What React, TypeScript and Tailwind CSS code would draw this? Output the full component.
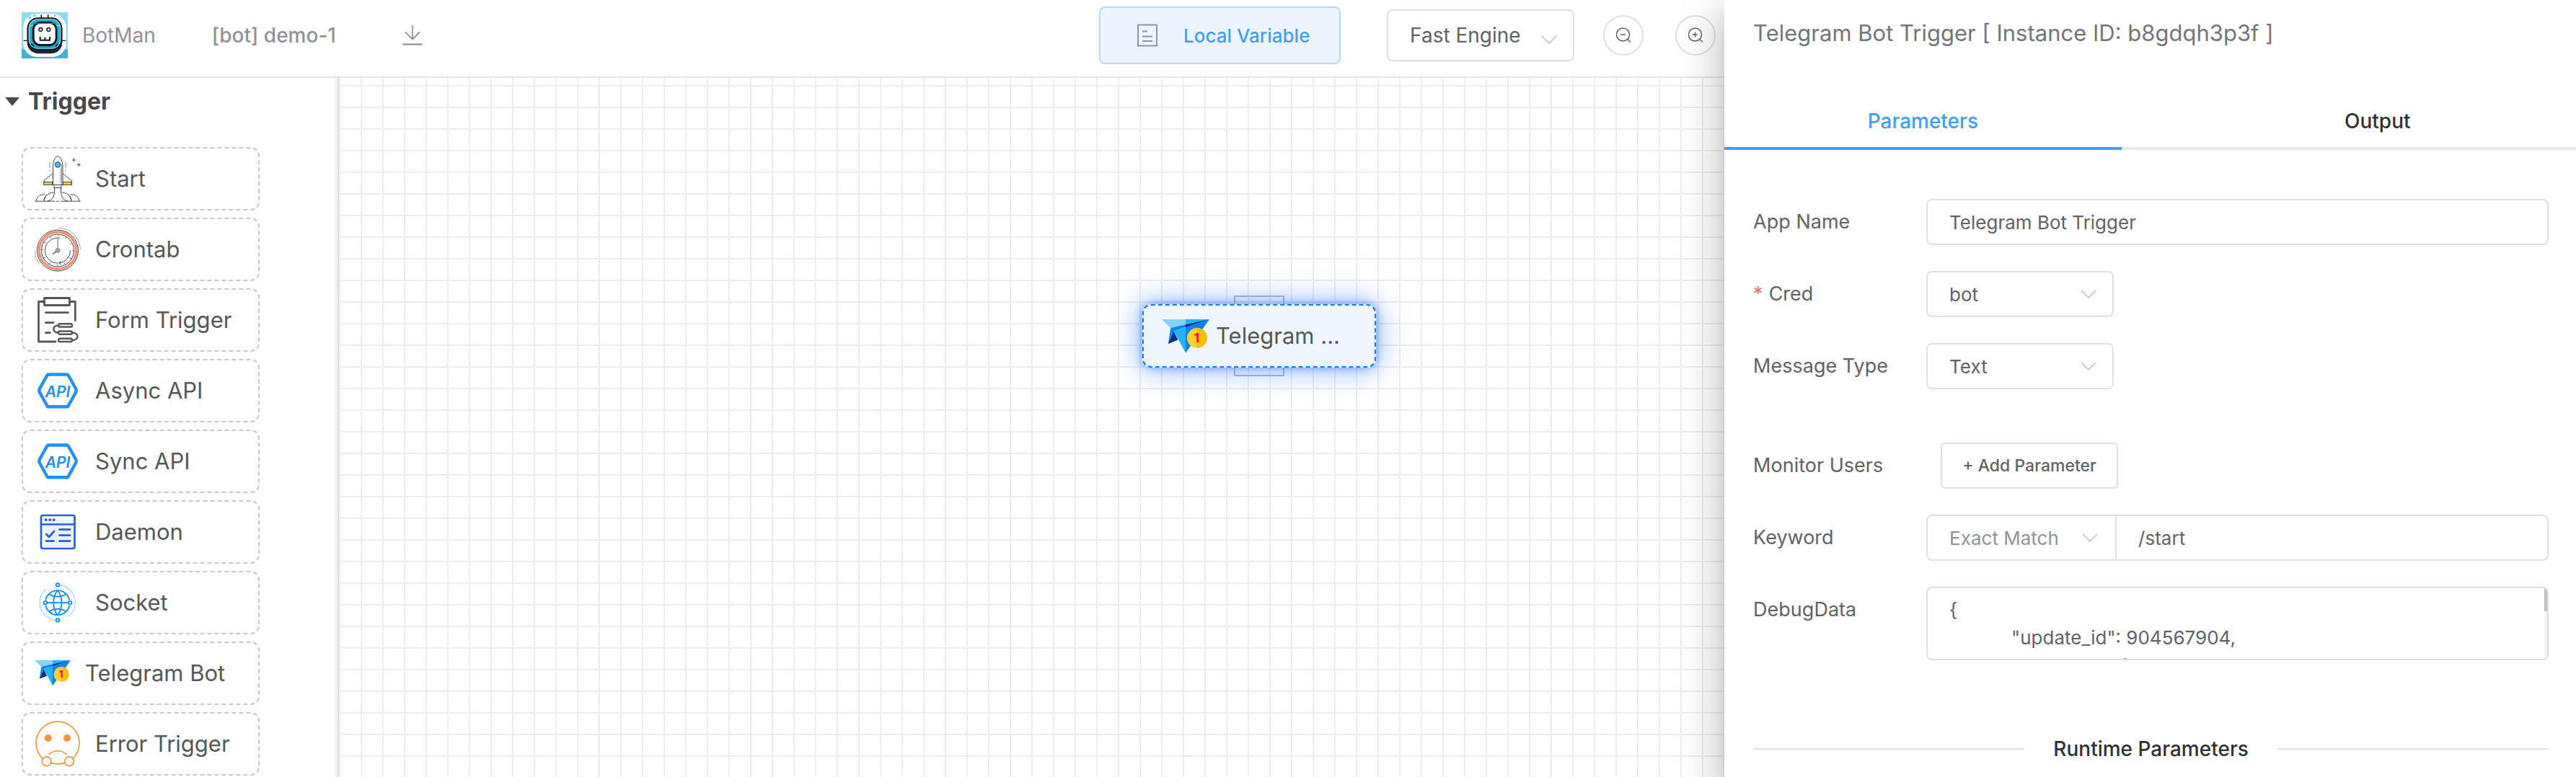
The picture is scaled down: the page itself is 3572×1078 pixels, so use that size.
import type { ReactNode } from "react";

const ink = "#3f4650";

function LogoIcon() {
  return (
    <svg viewBox="0 0 192 192" className="size-16" aria-hidden="true">
      <rect width="192" height="192" fill="#8fdcee" />
      <rect y="154" width="192" height="38" fill="#3fb3cf" />
      <rect x="7" y="6" width="178" height="180" rx="56" fill="#fbfcfd" />
      <path d="M82 10v14M110 10v14" stroke="#111827" strokeWidth="5" />
      <circle cx="34" cy="22" r="5" fill="#5cc7de" />
      <circle cx="54" cy="14" r="4" fill="#5cc7de" />
      <circle cx="138" cy="14" r="4" fill="#5cc7de" />
      <circle cx="158" cy="22" r="4" fill="#a8dfeb" />
      <path d="M8 118h20M164 118h20" stroke="#111827" strokeWidth="4" />
      <rect x="23" y="24" width="146" height="148" rx="46" fill="#1b2436" />
      <rect x="23" y="22" width="146" height="136" rx="44" fill="#0f1623" />
      <rect x="29" y="28" width="134" height="124" rx="38" fill="#dfe8ee" />
      <rect x="32" y="30" width="128" height="121" rx="36" fill="#18b4cc" />
      <path d="M33 56h20M139 56h20" stroke="#7fdcea" strokeWidth="4" />
      <path d="M40 132l12 10M152 132l-12 10" stroke="#0f1623" strokeWidth="5" />
      <rect x="44" y="38" width="104" height="104" rx="34" fill="#0f1623" />
      <rect x="48" y="44" width="96" height="4" rx="2" fill="#5b6b7d" />
      <rect x="53" y="48" width="87" height="84" rx="24" fill="#fff" />
      <circle cx="79" cy="72" r="7" fill="none" stroke="#1f2937" strokeWidth="5" />
      <circle cx="112" cy="72" r="7" fill="none" stroke="#1f2937" strokeWidth="5" />
      <path d="M55 93h83" stroke="#eef1f4" strokeWidth="3" />
      <path d="M77 102v14h40v-14M97 104v12" fill="none" stroke="#111827" strokeWidth="6" />
    </svg>
  );
}

function RocketIcon() {
  return (
    <svg viewBox="0 0 64 64" className="size-16" fill="none" stroke={ink} strokeWidth="1" aria-hidden="true">
      <path d="M25 25 13 34.500V40.500H25M39.300 25l12 9.500V40.500h-12" fill="#fff" />
      <rect x="13" y="36.500" width="11.500" height="4" fill="#ffcf33" />
      <rect x="39.500" y="36.500" width="11.500" height="4" fill="#ffcf33" />
      <path d="M25.500 40.500V15C25.500 7 29 .7 32 .7S39 7 39 15v25.500z" fill="#fff" />
      <path d="M36 17v21M37.500 12v28" stroke="#8b9097" />
      <circle cx="32" cy="12.500" r="3.800" fill="#3bbcf7" />
      <rect x="27" y="40.500" width="10" height="4" />
      <path d="M21 9v8M21 19.500v2M43 9v8M43 19.500v2" stroke="#8b9097" />
      <path d="M54.500 3.500v5M52 6h5M61.300 10.200v5M58.800 12.700h5" />
      <path d="M27.500 45v5c0 7-4 12.500-9.500 13M36.500 45v5c0 7 4 12.500 9.500 13" />
      <path d="M2.500 63c0-5 4-9 9-9h3M13.500 63c0-6 5-12 13-12M61.500 63c0-5-4-9-9-9h-3M50.500 63c0-6-5-12-13-12" />
      <path d="M17 54.500c-3 2-4 5-4 8M47 54.500c3 2 4 5 4 8" />
      <path d="M0 63.200h28M30 63.200h4M36 63.200h28" />
    </svg>
  );
}

function ClockIcon() {
  return (
    <svg viewBox="0 0 64 64" className="size-16" fill="none" stroke={ink} strokeWidth="1" aria-hidden="true">
      <circle cx="32" cy="33.500" r="28.500" />
      <circle cx="32" cy="33.500" r="25.700" stroke="#fa8f6f" strokeWidth="3.400" />
      <circle cx="32" cy="33.500" r="22.500" />
      <circle cx="32" cy="33.500" r="17.500" strokeDasharray="50 2 58" strokeDashoffset="25" />
      <circle cx="32" cy="33.500" r="20.800" strokeWidth="2.600" strokeDasharray=".8 10.090" />
      <path d="M32 17v13" stroke="#8b9097" strokeWidth="1.500" />
      <path d="M30 35l-5 3.500" strokeWidth="1.300" />
      <circle cx="32" cy="33.500" r="2.700" fill="#ffd9cc" />
      <circle cx="32" cy="33.500" r=".8" fill="#f2603c" stroke="#f2603c" />
      <path d="M37 49l-3.500 1.800 2.500 2.200" />
      <path d="M33.500 2A31.500 31.500 0 0 1 63.500 33" strokeDasharray="1.500 1" strokeWidth=".8" />
      <path d="M.5 34a31.500 31.500 0 0 0 6 18" strokeDasharray="1.500 1" strokeWidth=".8" />
    </svg>
  );
}

function FormIcon() {
  return (
    <svg viewBox="0 0 64 64" className="size-16" fill="none" stroke="#555657" strokeWidth="2.800" strokeLinecap="round" strokeLinejoin="round" aria-hidden="true">
      <rect x="13.500" y="1.500" width="35" height="10" />
      <path d="M13 6.500H5.500V62H29M49 6.500h7.300v26" />
      <path d="M15.500 21.700H46.500M15.500 35.700H26M15.500 49.700h6" />
      <rect x="33" y="37.300" width="19" height="4.200" rx="2.100" strokeWidth="2.500" />
      <rect x="33" y="47.500" width="19" height="4.200" rx="2.100" strokeWidth="2.500" />
      <rect x="33" y="57.800" width="19" height="4.200" rx="2.100" strokeWidth="2.500" />
      <path d="M33 39.400c-9 0-9 10.200 0 10.200M52 49.600c10 0 10 10.300 0 10.300" strokeWidth="2.500" />
    </svg>
  );
}

function ApiIcon() {
  return (
    <svg viewBox="0 0 64 64" className="size-16" aria-hidden="true">
      <path
        d="M20 9.500H44Q46 9.500 47.200 11.500L57.200 29.500Q58.200 31.700 57.200 34L46 54.300H18L6.800 34Q5.800 31.700 6.800 29.500L16.800 11.500Q18 9.500 20 9.500Z"
        fill="none"
        stroke="#228fff"
        strokeWidth="4.400"
        strokeLinejoin="round"
      />
      <text x="32" y="41" textAnchor="middle" fontFamily="Inter, sans-serif" fontSize="21" fontStyle="italic" fontWeight="600" fill="#228fff">
        API
      </text>
    </svg>
  );
}

function DaemonIcon() {
  return (
    <svg viewBox="0 0 64 64" className="size-16" fill="none" stroke="#2b5fd3" strokeWidth="2.700" strokeLinecap="round" strokeLinejoin="round" aria-hidden="true">
      <rect x="15.500" y="15" width="40" height="38" fill="#e8f1fd" stroke="none" />
      <rect x="9" y="9" width="46.500" height="46" rx="2.500" />
      <path d="M9 21.500h46.500" />
      <g fill="#2b5fd3" stroke="none">
        <circle cx="15.700" cy="15.200" r="1.900" />
        <circle cx="21.300" cy="15.200" r="1.900" />
        <circle cx="26.700" cy="15.200" r="1.900" />
      </g>
      <path d="M16 35l4 4 7-8M34.500 28.700h14.500M34.500 36.700h14.500M34.500 44.700h14.500M15.800 44.700H26.500" />
    </svg>
  );
}

function GlobeIcon() {
  return (
    <svg viewBox="0 0 64 64" className="size-16" fill="none" stroke="#1592ff" strokeWidth="1.900" aria-hidden="true">
      <path d="M34.500 7.500A24.600 24.600 0 0 1 47 51.200M15.500 13.500A24.600 24.600 0 0 0 29 56.500" stroke="#a9d4ff" strokeWidth="1.300" />
      <path d="M15.200 28.500a17 17 0 0 1 33.200 0M15.200 36a17 17 0 0 0 33.200 0" />
      <path d="M31.800 15c-7.500 9-7.500 25.500 0 34.500M31.800 15c7.500 9 7.500 25.500 0 34.500" />
      <path d="M20 20c7 5 17 5 23.500 0M20 44.500c7-5 17-5 23.500 0M17.500 32.200h29" />
      <g fill="#fff">
        <circle cx="15" cy="32.200" r="2.300" />
        <circle cx="49" cy="32.200" r="2.300" />
        <circle cx="32" cy="7.500" r="2.300" />
        <circle cx="32" cy="56.500" r="2.300" />
      </g>
    </svg>
  );
}

function TelegramIcon({ className }: { className: string }) {
  return (
    <svg viewBox="0 0 194 137" className={className} aria-hidden="true">
      <path d="M0 0H97V24L36 35Z" fill="#85d1ff" />
      <path d="M97 0H194L97 24Z" fill="#22b5fb" />
      <path d="M36 35L194 0L49 48L26 100Z" fill="#0a84ff" />
      <path d="M97 22L194 0L97 34Z" fill="#00307f" />
      <path d="M49 48L26 100L66 84Z" fill="#00307f" />
      <path d="M49 48L97 32V137Z" fill="#23b4f8" />
      <path d="M97 34L194 0L97 137Z" fill="#0682ff" />
      <circle cx="144" cy="76" r="41" fill="#ffd12e" />
      <path d="M144 35a41 41 0 0 1 0 82Z" fill="#ffbe00" />
      <text x="142" y="94" textAnchor="middle" fontFamily="Inter, sans-serif" fontSize="50" fontWeight="800" fill="#f0145a">
        1
      </text>
    </svg>
  );
}

function SadIcon() {
  return (
    <svg viewBox="0 0 64 64" className="size-16" fill="none" stroke="#ff943c" strokeWidth="1.700" strokeLinecap="round" aria-hidden="true">
      <path d="M11 52.500A30 30 0 1 1 53 52.500M23 58.600q9 2.600 18.500 0" />
      <circle cx="16.600" cy="56.300" r="6.400" />
      <circle cx="48" cy="56.300" r="6.400" />
      <path d="M20 46.500q12-9.500 24.300 0" />
      <g fill="#ff943c" stroke="none">
        <circle cx="18.800" cy="24" r="5" />
        <circle cx="45" cy="24" r="5" />
      </g>
    </svg>
  );
}

function Chevron({ className }: { className: string }) {
  return (
    <svg viewBox="0 0 22 12" className={className} fill="none" stroke="#bcc0c8" strokeWidth="1.600" aria-hidden="true">
      <path d="M1 1l10 10L21 1" />
    </svg>
  );
}

function MagnifierIcon({ plus = false }: { plus?: boolean }) {
  return (
    <svg viewBox="0 0 24 24" className="size-6" fill="none" stroke="#606266" strokeWidth="1.500" aria-hidden="true">
      <circle cx="11.500" cy="11" r="9" />
      <path d="M18 17.500l4 4M8 11h7" />
      {plus && <path d="M11.500 7.500v7" />}
    </svg>
  );
}

const triggers: { name: string; icon: ReactNode }[] = [
  { name: "Start", icon: <RocketIcon /> },
  { name: "Crontab", icon: <ClockIcon /> },
  { name: "Form Trigger", icon: <FormIcon /> },
  { name: "Async API", icon: <ApiIcon /> },
  { name: "Sync API", icon: <ApiIcon /> },
  { name: "Daemon", icon: <DaemonIcon /> },
  { name: "Socket", icon: <GlobeIcon /> },
  { name: "Telegram Bot", icon: <TelegramIcon className="w-[50px]" /> },
  { name: "Error Trigger", icon: <SadIcon /> },
];

function Header() {
  return (
    <header className="flex h-[108px] shrink-0 items-center border-b-2 border-[#e4e4e4] pr-3 pb-2 pl-[30px] text-[28px]">
      <LogoIcon />
      <h1 className="ml-5 text-[#909399]">BotMan</h1>
      <span className="ml-[78px] font-medium text-[#909399]">[bot] demo-1</span>
      <button type="button" aria-label="Download" className="ml-[92px]">
        <svg viewBox="0 0 28 28" className="size-7" fill="none" stroke="#909399" strokeWidth="1.800" aria-hidden="true">
          <path d="M14 0v20M4 9.500l10 10 10-10" />
          <path d="M.5 26.500h27" strokeWidth="2.200" />
        </svg>
      </button>
      <button
        type="button"
        className="ml-auto flex h-20 w-[335px] items-center gap-9 rounded-lg border-2 border-[#b3d8ff] bg-[#ecf5ff] pl-[51px] text-[26px] font-medium text-[#409eff]"
      >
        <svg viewBox="0 0 28 32" className="h-8 w-7" fill="none" stroke="#909399" strokeWidth="2" aria-hidden="true">
          <rect x="1" y="1.500" width="26" height="29" />
          <path d="M7 10.500h7M7 17.500h14M7 24h14" />
        </svg>
        Local Variable
      </button>
      <div className="relative ml-16 h-[72px] w-[260px]">
        <select
          aria-label="Engine"
          className="size-full appearance-none rounded-lg border-2 border-[#dcdfe6] bg-white pl-[30px] text-[#606266]"
        >
          <option>Fast Engine</option>
        </select>
        <Chevron className="pointer-events-none absolute top-9 right-6 w-[22px]" />
      </div>
      <button type="button" aria-label="Zoom out" className="ml-10 flex size-14 items-center justify-center rounded-full border-2 border-[#dcdfe6] bg-white">
        <MagnifierIcon />
      </button>
      <button type="button" aria-label="Zoom in" className="ml-11 flex size-14 items-center justify-center rounded-full border-2 border-[#dcdfe6] bg-white">
        <MagnifierIcon plus />
      </button>
    </header>
  );
}

function Sidebar() {
  return (
    <nav aria-label="Nodes" className="w-[472px] shrink-0 overflow-hidden border-r-2 border-[#efefef]">
      <div className="h-full border-r-2 border-[#dcdcdc]">
        <div className="h-full border-r-4 border-[#f2f2f2]">
          <button type="button" aria-expanded="true" className="flex h-[66px] items-center gap-3 pl-[7px] text-[32px] font-bold text-[#484848]">
            <svg viewBox="0 0 20 12" className="w-5" fill="#484848" aria-hidden="true">
              <path d="M0 0h20L10 12z" />
            </svg>
            Trigger
          </button>
          <ul className="mt-[30px] flex flex-col gap-[10px] pl-[30px]">
            {triggers.map((t) => (
              <li
                key={t.name}
                className="flex h-[88px] w-[330px] items-center gap-5 rounded-xl border-2 border-dashed border-[#c6c7cb] pl-4 text-[31px] text-[#565758]"
              >
                {t.icon}
                {t.name}
              </li>
            ))}
          </ul>
        </div>
      </div>
    </nav>
  );
}

function Canvas() {
  return (
    <main className="relative flex-1 overflow-hidden bg-[linear-gradient(to_right,#ededed_2px,transparent_2px),linear-gradient(to_bottom,#ededed_2px,transparent_2px)] bg-[length:30px_30px] bg-[position:28px_10px]">
      <div className="absolute top-[314px] left-[1112px] w-[324px]">
        <div className="absolute -top-3 left-[127px] h-28 w-[70px] border-2 border-[#b4bac8]" />
        <div className="relative flex h-[88px] items-center gap-[9px] rounded-xl border-2 border-dashed border-[#1879ff] bg-[#f0f6ff] pl-[25px] text-[31px] text-[#565758] shadow-[0_0_12px_0_rgba(24,108,255,0.5),0_0_40px_2px_rgba(24,108,255,0.5)]">
          <TelegramIcon className="w-[66px]" />
          Telegram ...
        </div>
      </div>
    </main>
  );
}

function Field({ label, htmlFor, required = false, children }: { label: string; htmlFor: string; required?: boolean; children: ReactNode }) {
  return (
    <div className="flex items-start">
      <label htmlFor={htmlFor} className="flex h-16 w-60 shrink-0 items-center gap-2 text-[27px]">
        {required && <span className="text-[#f56c6c]">*</span>}
        {label}
      </label>
      {children}
    </div>
  );
}

function SelectBox({ id, value }: { id: string; value: string }) {
  return (
    <div className="relative h-16 w-[260px]">
      <select id={id} className="size-full appearance-none rounded-lg border-2 border-[#dcdfe6] bg-white pl-[30px] text-[26px] text-[#606266]">
        <option>{value}</option>
      </select>
      <Chevron className="pointer-events-none absolute top-[26px] right-6 w-[22px]" />
    </div>
  );
}

const debugData = `{
\t"update_id": 904567904,
\t"message": {
\t\t"message_id": 12,
\t\t"text": "/start"
\t}
}`;

function Drawer() {
  return (
    <aside className="z-10 w-[33.06%] shrink-0 bg-white text-[#606266] shadow-[0_16px_20px_-10px_rgba(0,0,0,0.2),0_32px_48px_4px_rgba(0,0,0,0.14),0_12px_60px_10px_rgba(0,0,0,0.12)]">
      <h2 className="flex h-[92px] items-center pl-10 text-[31px] text-[#72767b]">Telegram Bot Trigger [ Instance ID: b8gdqh3p3f ]</h2>
      <div role="tablist" className="mt-9 flex h-20 text-[28px] font-medium">
        <button type="button" role="tab" aria-selected="true" className="flex-1 border-b-4 border-[#409eff] pt-1 text-[#409eff]">
          Parameters
        </button>
        <button type="button" role="tab" aria-selected="false" className="flex-1 border-b-4 border-[#e4e7ed] pt-1 pl-20 text-[#303133]">
          Output
        </button>
      </div>
      <form className="flex flex-col gap-9 pt-[68px] pr-[38px] pl-10">
        <Field label="App Name" htmlFor="app-name">
          <input id="app-name" defaultValue="Telegram Bot Trigger" className="h-16 min-w-0 flex-1 rounded-lg border-2 border-[#dcdfe6] px-[30px] text-[26px]" />
        </Field>
        <Field label="Cred" htmlFor="cred" required>
          <SelectBox id="cred" value="bot" />
        </Field>
        <Field label="Message Type" htmlFor="message-type">
          <SelectBox id="message-type" value="Text" />
        </Field>
        <div className="mt-[38px]">
          <Field label="Monitor Users" htmlFor="monitor-users">
            <button id="monitor-users" type="button" className="ml-5 h-16 w-[246px] rounded-md border-2 border-[#dcdfe6] text-[23px] font-medium">
              + Add Parameter
            </button>
          </Field>
        </div>
        <Field label="Keyword" htmlFor="keyword">
          <div className="flex h-16 min-w-0 flex-1 rounded-lg border-2 border-[#dcdfe6] text-[26px]">
            <div className="relative w-[262px] border-r-2 border-[#dcdfe6]">
              <select aria-label="Match mode" className="size-full appearance-none rounded-lg bg-white pl-[30px] text-[#909399]">
                <option>Exact Match</option>
              </select>
              <Chevron className="pointer-events-none absolute top-6 right-6 w-[22px]" />
            </div>
            <input id="keyword" defaultValue="/start" className="min-w-0 flex-1 rounded-lg px-[30px]" />
          </div>
        </Field>
        <Field label="DebugData" htmlFor="debug-data">
          <div className="relative flex h-[102px] min-w-0 flex-1 overflow-hidden rounded-lg border-2 border-[#dcdfe6]">
            <textarea
              id="debug-data"
              defaultValue={debugData}
              className="w-full resize-none px-[30px] pt-[10px] text-[26px] leading-[39px] [scrollbar-width:none] [tab-size:86px]"
            />
            <div className="absolute inset-y-0 right-0 w-1 bg-[#f5f5f5]">
              <div className="h-8 bg-[#c1c1c1]" />
            </div>
          </div>
        </Field>
      </form>
      <div className="mt-[102px] flex items-center gap-10 pr-[38px] pl-10 text-[28px] font-medium text-[#303133]">
        <hr className="flex-1 border-t-2 border-[#dcdfe6]" />
        <h3>Runtime Parameters</h3>
        <hr className="flex-1 border-t-2 border-[#dcdfe6]" />
      </div>
    </aside>
  );
}

export default function App() {
  return (
    <div className="flex h-screen overflow-hidden bg-white font-[Inter,'Liberation_Sans',sans-serif]">
      <div className="flex min-w-0 flex-1 flex-col">
        <Header />
        <div className="flex min-h-0 flex-1">
          <Sidebar />
          <Canvas />
        </div>
      </div>
      <Drawer />
    </div>
  );
}
